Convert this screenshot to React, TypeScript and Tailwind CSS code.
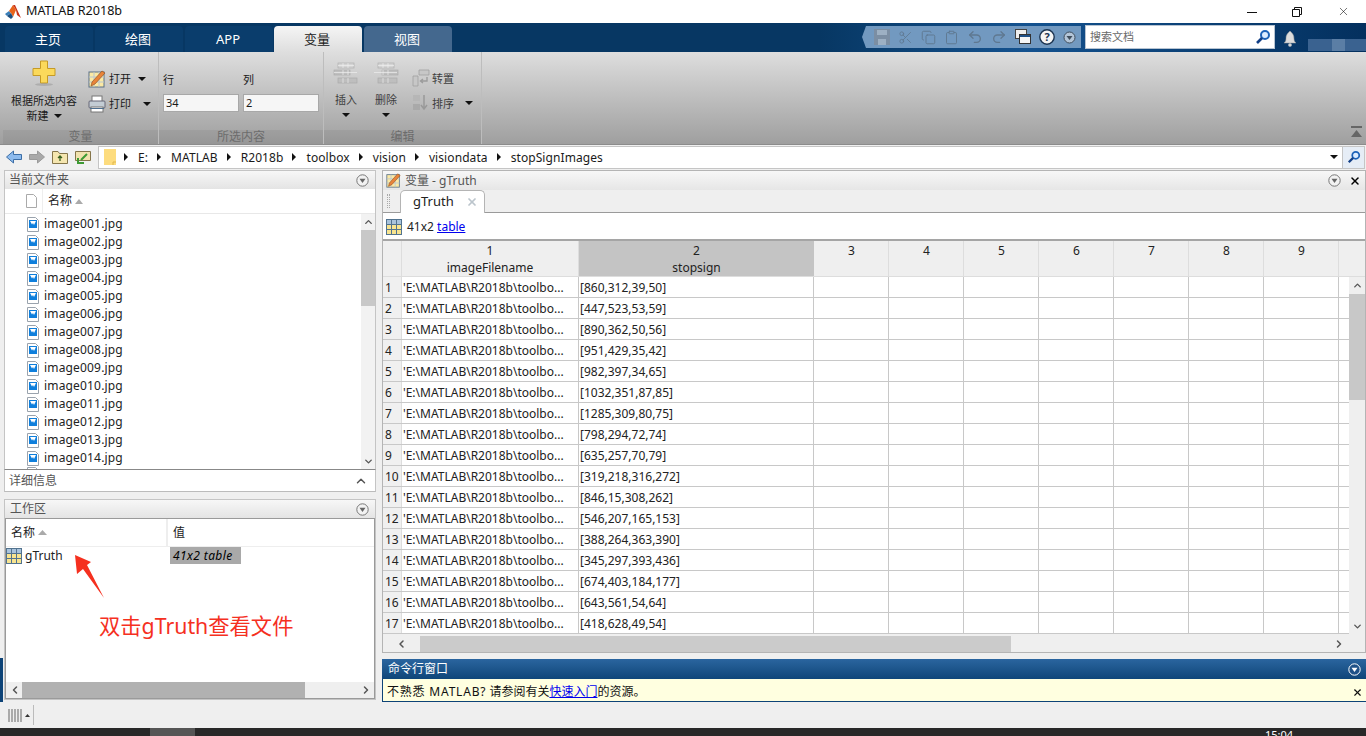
import { ChevronDown, ChevronLeft, ChevronRight, ChevronUp, Clipboard, Copy, Redo2, Scissors, Undo2, X } from 'lucide-react'

const FONT = "font-['Noto_Sans','Noto_Sans_CJK_SC',sans-serif]"

const rows = [
  '[860,312,39,50]',
  '[447,523,53,59]',
  '[890,362,50,56]',
  '[951,429,35,42]',
  '[982,397,34,65]',
  '[1032,351,87,85]',
  '[1285,309,80,75]',
  '[798,294,72,74]',
  '[635,257,70,79]',
  '[319,218,316,272]',
  '[846,15,308,262]',
  '[546,207,165,153]',
  '[388,264,363,390]',
  '[345,297,393,436]',
  '[674,403,184,177]',
  '[643,561,54,64]',
  '[418,628,49,54]',
]

const emptyCols = [3, 4, 5, 6, 7, 8, 9]
const crumbs = ['E:', 'MATLAB', 'R2018b', 'toolbox', 'vision', 'visiondata', 'stopSignImages']
const files = Array.from({ length: 14 }, (_, i) => `image${String(i + 1).padStart(3, '0')}.jpg`)

function Logo() {
  return (
    <svg width="16" height="16" viewBox="0 0 16 16">
      <polygon points="0,10 4,7 6,9 2,12" fill="#3a7fb8" />
      <polygon points="4,7 8,1 11,6 8,13 6,9" fill="#e8641b" />
      <polygon points="8,1 10,1 16,14 12,11 11,6" fill="#c9341a" />
      <polygon points="2,12 6,9 8,13 6,15" fill="#1d4f80" />
    </svg>
  )
}

function Caret({ className = '' }: { className?: string }) {
  return (
    <svg width="8" height="4" viewBox="0 0 8 4" className={className}>
      <polygon points="0,0 8,0 4,4" fill="#111" />
    </svg>
  )
}

function MenuCircle({ light = false }: { light?: boolean }) {
  return (
    <svg width="13" height="13" viewBox="0 0 13 13">
      <circle cx="6.5" cy="6.5" r="5.7" fill={light ? '#1f5288' : '#f2f2f2'} stroke={light ? '#fff' : '#777'} />
      <polygon points="3.5,4.8 9.5,4.8 6.5,9" fill={light ? '#fff' : '#666'} />
    </svg>
  )
}

function SearchGlass({ size = 16 }: { size?: number }) {
  return (
    <svg width={size} height={size} viewBox="0 0 16 16">
      <circle cx="10" cy="6" r="4" fill="#dcecff" stroke="#1c62b8" strokeWidth="2" />
      <line x1="7" y1="9" x2="2" y2="14" stroke="#123f86" strokeWidth="2.6" />
    </svg>
  )
}

function GridIcon() {
  return (
    <svg width="16" height="16" viewBox="0 0 16 16">
      <rect x="0.5" y="0.5" width="15" height="15" fill="#f8e48f" stroke="#52738f" />
      <rect x="1" y="1" width="14" height="4" fill="#a9c3dc" />
      <path d="M5.5 1V15M10.5 1V15M1 5.5H15M1 10.5H15" stroke="#52738f" />
    </svg>
  )
}

function PencilNote({ size = 18 }: { size?: number }) {
  return (
    <svg width={size} height={size} viewBox="0 0 18 18">
      <rect x="1" y="2" width="15" height="15" fill="#fbe9a4" stroke="#5a7188" />
      <path d="M1 7H16M6 2V17M11 2V17M1 12H16" stroke="#b9c6d2" />
      <polygon points="14,1 17,3 7,14 3,16 4,12" fill="#e8843a" stroke="#8a4a1b" strokeWidth="0.6" />
    </svg>
  )
}

function Printer() {
  return (
    <svg width="18" height="18" viewBox="0 0 18 18">
      <rect x="4" y="1" width="10" height="6" fill="#fff" stroke="#777" />
      <rect x="1" y="6" width="16" height="7" rx="1" fill="#c3ccd4" stroke="#667" />
      <rect x="3" y="12" width="12" height="5" fill="#fff" stroke="#777" />
      <rect x="2" y="13" width="14" height="1" fill="#4f6f8f" />
    </svg>
  )
}

function FileIcon() {
  return (
    <svg width="12" height="15" viewBox="0 0 12 15">
      <path d="M0.5 0.5H8.5L11.5 3.5V14.5H0.5Z" fill="#fff" stroke="#9aa3ad" />
      <rect x="2" y="3" width="8" height="8" fill="#0f7fdc" />
      <path d="M3 4H9L7 8L6 6L5 7.5Z" fill="#fff" />
    </svg>
  )
}

function Bricks({ shift = false }: { shift?: boolean }) {
  return (
    <svg width="26" height="24" viewBox="0 0 26 24">
      <g fill="#bdbdbd" stroke="#a2a2a2" strokeWidth="0.6" opacity="0.85">
        <rect x="5" y="1" width="16" height="5" fill="#d4d4d4" />
        <rect x={shift ? 9 : 1} y="8" width="16" height="5" />
        <rect x="5" y="16" width="19" height="5" />
      </g>
      <path d="M5 3.5H21M10 1V6M15 1V6M1 10.5H24M10 8V13M15 8V13M10 16V21M15 16V21" stroke="#eee" strokeWidth="0.7" />
    </svg>
  )
}

function DisabledSmall({ kind }: { kind: 'transpose' | 'sort' }) {
  return kind === 'transpose' ? (
    <svg width="18" height="18" viewBox="0 0 18 18">
      <path d="M1 7H6V17H1ZM7 1H17V6H7Z" fill="#c7c7c7" stroke="#9c9c9c" strokeWidth="0.7" />
      <path d="M15 8V12H9M11 10L8.500 12L11 14" fill="none" stroke="#9c9c9c" strokeWidth="1.4" />
    </svg>
  ) : (
    <svg width="18" height="18" viewBox="0 0 18 18">
      <path d="M12 1V14M9 11L12 15L15 11" fill="none" stroke="#999" strokeWidth="1.5" />
      <rect x="1" y="1" width="7" height="6" fill="#b6b6b6" />
      <rect x="1" y="10" width="7" height="6" fill="#a9a9a9" />
    </svg>
  )
}

function RibbonFooter({ label }: { label: string }) {
  return <div className="h-[14px] bg-black/5 text-center text-[12px] leading-[14px] text-[#6c6c6c]">{label}</div>
}

function Ribbon() {
  return (
    <div className="flex h-[92px] bg-gradient-to-b from-[#dedede] to-[#9f9f9f] pl-[3px]">
      <div className="flex w-[156px] flex-col border-r border-[#bdbdbd]">
        <div className="flex h-[78px] flex-1">
          <div className="flex w-[85px] flex-col items-center pr-[3px] pt-[8px] text-[11px] leading-[15px] text-[#1a1a1a]">
            <svg width="24" height="26" viewBox="0 0 24 26">
              <path d="M8.500 1H15.500V8.500H23V15.500H15.500V23H8.500V15.500H1V8.500H8.500Z" fill="#fbd95b" stroke="#c59a26" />
              <ellipse cx="12" cy="24.500" rx="9" ry="1.500" fill="#888" opacity="0.4" />
            </svg>
            <span className="mt-[7px] whitespace-nowrap">根据所选内容</span>
            <span className="flex items-center gap-[5px]">
              新建 <Caret />
            </span>
          </div>
          <div className="flex flex-col gap-[7px] pt-[18px] text-[11px] leading-[18px] text-[#1a1a1a]">
            <div className="flex items-center gap-[3px]">
              <PencilNote />
              <span>打开</span>
              <Caret className="ml-[4px]" />
            </div>
            <div className="flex items-center gap-[3px]">
              <Printer />
              <span>打印</span>
              <Caret className="ml-[9px]" />
            </div>
          </div>
        </div>
        <RibbonFooter label="变量" />
      </div>

      <div className="flex w-[165px] flex-col border-r border-[#bdbdbd]">
        <div className="flex flex-1 gap-[4px] pl-[4px] pt-[20px] text-[11px] text-[#1a1a1a]">
          {['行', '列'].map((label, i) => (
            <div key={label} className="w-[76px]">
              <div className="h-[22px] leading-[16px]">{label}</div>
              <div className="h-[18px] border border-[#a8a8a8] bg-[#f6f6f6] px-[2px] text-[11px] leading-[16px]">
                {i === 0 ? '34' : '2'}
              </div>
            </div>
          ))}
        </div>
        <RibbonFooter label="所选内容" />
      </div>

      <div className="flex w-[158px] flex-col border-r border-[#bdbdbd]">
        <div className="flex flex-1 pl-[2px] pt-[10px] text-[11px] leading-[15px] text-[#3e3e3e]">
          <div className="flex w-[40px] flex-col items-center">
            <Bricks />
            <span className="mt-[6px]">插入</span>
            <Caret className="mt-[6px]" />
          </div>
          <div className="flex w-[40px] flex-col items-center">
            <Bricks shift />
            <span className="mt-[6px]">删除</span>
            <Caret className="mt-[6px]" />
          </div>
          <div className="flex flex-col gap-[7px] pl-[6px] pt-[7px]">
            <div className="flex items-center gap-[2px]">
              <DisabledSmall kind="transpose" />
              <span>转置</span>
            </div>
            <div className="flex items-center gap-[2px]">
              <DisabledSmall kind="sort" />
              <span>排序</span>
              <Caret className="ml-[9px]" />
            </div>
          </div>
        </div>
        <RibbonFooter label="编辑" />
      </div>

      <div className="flex flex-1 items-end justify-end pb-[6px] pr-[4px]">
        <svg width="11" height="12" viewBox="0 0 11 12">
          <rect width="11" height="2" fill="#666" />
          <polygon points="0,11 11,11 5.500,4" fill="#666" />
        </svg>
      </div>
    </div>
  )
}

function TabStrip() {
  const tabs = ['主页', '绘图', 'APP']
  return (
    <div className="flex h-[29px] bg-gradient-to-r from-[#073763] from-60% via-[#14528f] via-75% to-[#04305e] pl-[5px] pt-[3px]">
      <div className="flex gap-[2px]">
        {tabs.map((t) => (
          <div key={t} className="h-[26px] w-[88px] rounded-t-[4px] bg-[#0a3d6c] pr-[2px] text-center text-[13px] leading-[26px] text-white">
            {t}
          </div>
        ))}
        <div className="-ml-[1px] h-[26px] w-[88px] rounded-t-[4px] bg-gradient-to-b from-[#f5f5f5] to-[#dedede] pr-[2px] text-center text-[13px] leading-[26px] text-[#222]">
          变量
        </div>
        <div className="h-[26px] w-[88px] rounded-t-[4px] bg-[#44688e] pr-[2px] text-center text-[13px] leading-[26px] text-white">视图</div>
      </div>
      <div className="flex-1" />
      <div className="mr-[4px] flex h-[22px] items-center gap-[8px] bg-[#7299c0] pl-[12px] pr-[5px] text-[#5f7890] [clip-path:polygon(4px_0,100%_0,100%_100%,4px_100%,0_50%)]">
        <svg width="16" height="16" viewBox="0 0 16 16">
          <path d="M0 0H16V16H0Z" fill="#7b8ea3" />
          <path d="M3 1H13V6H3ZM4 10H12V16H4Z" fill="#9db0c3" />
        </svg>
        <Scissors size={15} strokeWidth={1.3} />
        <Copy size={15} strokeWidth={1.5} />
        <Clipboard size={15} strokeWidth={1.5} />
        <Undo2 size={16} strokeWidth={2} />
        <Redo2 size={16} strokeWidth={2} />
        <svg width="16" height="16" viewBox="0 0 16 16">
          <rect x="0.500" y="0.500" width="11" height="9" fill="#eee" stroke="#444" />
          <rect x="4.500" y="5.500" width="11" height="9" fill="#f5f5f5" stroke="#333" />
          <rect x="5" y="6" width="10" height="2" fill="#1e4f86" />
        </svg>
        <svg width="16" height="16" viewBox="0 0 16 16">
          <circle cx="8" cy="8" r="7.200" fill="#f4f4f4" stroke="#1b3350" strokeWidth="1.400" />
          <text x="8" y="12" textAnchor="middle" fontSize="11" fontWeight="700" fill="#1b3350">?</text>
        </svg>
        <svg width="13" height="13" viewBox="0 0 13 13">
          <circle cx="6.500" cy="6.500" r="5.500" fill="#b3c5d8" stroke="#3f4d5c" />
          <polygon points="3.500,5 9.500,5 6.500,9" fill="#3f4d5c" />
        </svg>
      </div>
      <div className="flex h-[24px] w-[190px] -translate-y-[1px] items-center justify-between border border-[#b7c4d2] bg-white pl-[4px] pr-[3px] text-[11px] text-[#6a6a6a]">
        <span>搜索文档</span>
        <SearchGlass />
      </div>
      <div className="flex w-[91px] items-start pl-[8px] pt-[4px]">
        <svg width="14" height="17" viewBox="0 0 14 17">
          <path d="M7 1C4 4 3 5 3 9C3 11 2 12 1 13H13C12 12 11 11 11 9C11 5 10 4 7 1Z" fill="#dcdcdc" stroke="#999" strokeWidth="0.500" />
          <circle cx="7" cy="15" r="1.800" fill="#d3d3d3" />
        </svg>
        <div className="ml-[11px] mt-[9px] flex">
          <div className="h-[12px] w-[24px] bg-[#3a6290]" />
          <div className="h-[12px] w-[13px] bg-[#5b7ea5]" />
          <div className="h-[12px] w-[21px] bg-[#3a6290]" />
        </div>
      </div>
    </div>
  )
}

function AddressBar() {
  return (
    <div className="flex h-[25px] items-center border-t border-[#8c8c8c] bg-[#f0f0f0] pl-[6px] pr-[1px]">
      <div className="flex w-[92px] items-center gap-[7px]">
        <svg width="16" height="14" viewBox="0 0 16 14">
          <path d="M0.500 7L7.500 1V4.500H15.500V9.500H7.500V13Z" fill="#8dbbee" stroke="#3c6ea6" />
        </svg>
        <svg width="16" height="14" viewBox="0 0 16 14">
          <path d="M15.500 7L8.500 1V4.500H0.500V9.500H8.500V13Z" fill="#a9a9a9" stroke="#9a9a9a" />
        </svg>
        <svg width="16" height="14" viewBox="0 0 16 14">
          <path d="M0.500 1.500H6L7.500 3.500H15.500V13.500H0.500Z" fill="#f5e6b0" stroke="#85754a" />
          <path d="M8 11V6M6 8L8 6L10 8" fill="none" stroke="#39601f" strokeWidth="1.300" />
        </svg>
        <svg width="16" height="15" viewBox="0 0 16 15">
          <path d="M0.500 1.500H15.500V10.500H0.500Z" fill="#f0e2ae" stroke="#85754a" />
          <path d="M12 4L6 10M3 8V13H9" fill="none" stroke="#3d9a34" strokeWidth="2" />
        </svg>
      </div>
      <div className="flex h-[23px] flex-1 items-center border border-[#c5c5c5] bg-white pl-[5px] text-[12px] tracking-[0.08px] text-[#1a1a1a]">
        <svg width="12" height="16" viewBox="0 0 12 16" className="mr-[-1px]">
          <path d="M0 0H12V16H0Z" fill="#fddc7e" />
          <path d="M9 16V13H12" fill="none" stroke="#e0b84c" />
        </svg>
        {crumbs.map((c) => (
          <div key={c} className="ml-[9px] flex items-center gap-[10px]">
            <svg width="4" height="8" viewBox="0 0 4 8">
              <polygon points="0,0 4,4 0,8" fill="#111" />
            </svg>
            <span className="pt-[1px] leading-[16px]">{c}</span>
          </div>
        ))}
        <div className="flex-1" />
        <Caret className="mr-[4px]" />
        <div className="flex h-[21px] w-[22px] items-center justify-center border-l border-[#c5c5c5] bg-[#e6edf6]">
          <SearchGlass size={14} />
        </div>
      </div>
    </div>
  )
}

function FolderPanel() {
  return (
    <div className="flex h-[299px] shrink-0 flex-col border border-b-0 border-[#c4c4c4]">
      <div className="flex h-[18px] shrink-0 items-center justify-between bg-gradient-to-b from-[#f7f7f7] to-[#e4e4e4] pl-[4px] pr-[6px] text-[12px] text-[#555]">
        <span>当前文件夹</span>
        <MenuCircle />
      </div>
      <div className="flex h-[25px] shrink-0 items-center border-b border-[#e8e8e8] bg-white text-[12px] text-[#222]">
        <div className="flex h-full w-[38px] items-center justify-end border-r border-[#eee] pr-[5px]">
          <svg width="11" height="14" viewBox="0 0 11 14">
            <path d="M0.500 0.500H7.500L10.500 3.500V13.500H0.500Z" fill="#fff" stroke="#aaa" />
          </svg>
        </div>
        <div className="flex items-center gap-[3px] pl-[5px]">
          <span>名称</span>
          <svg width="8" height="5" viewBox="0 0 8 5">
            <polygon points="0,5 8,5 4,0" fill="#aaa" />
          </svg>
        </div>
      </div>
      <div className="flex min-h-0 flex-1 bg-white">
        <div className="min-w-0 flex-1 overflow-hidden pl-[22px] pt-[1px]">
          {files.map((f) => (
            <div key={f} className="flex h-[18px] items-center gap-[5px] text-[12px] tracking-[0.17px] text-[#222]">
              <FileIcon />
              <span>{f}</span>
            </div>
          ))}
          <FileIcon />
        </div>
        <div className="flex w-[14px] flex-col items-center bg-[#f2f2f2] text-[#555]">
          <ChevronUp size={11} strokeWidth={3} className="my-[2px] h-[12px]" />
          <div className="h-[76px] w-full bg-[#c8c8c8]" />
          <div className="flex-1" />
          <ChevronDown size={11} strokeWidth={3} className="my-[2px]" />
        </div>
      </div>
    </div>
  )
}

function DetailBar() {
  return (
    <div className="flex h-[23px] shrink-0 items-center justify-between border border-t-[#888] border-x-[#c4c4c4] border-b-[#bbb] bg-white pl-[4px] pr-[7px] text-[12px] text-[#555]">
      <span>详细信息</span>
      <ChevronUp size={14} strokeWidth={2.5} />
    </div>
  )
}

function WorkspacePanel() {
  return (
    <div className="relative flex h-[201px] shrink-0 flex-col border border-[#c4c4c4]">
      <div className="flex h-[18px] shrink-0 items-center justify-between bg-gradient-to-b from-[#f7f7f7] to-[#e4e4e4] pl-[5px] pr-[6px] text-[12px] text-[#555]">
        <span>工作区</span>
        <MenuCircle />
      </div>
      <div className="flex min-h-0 flex-1 flex-col border border-[#9a9a9a] bg-white">
        <div className="flex h-[28px] shrink-0 items-center border-b border-[#eee] text-[12px] text-[#222]">
          <div className="flex h-full w-[162px] items-center gap-[3px] border-r-2 border-[#eee] pl-[5px]">
            <span>名称</span>
            <svg width="9" height="5" viewBox="0 0 9 5">
              <polygon points="0,5 9,5 4.500,0" fill="#aaa" />
            </svg>
          </div>
          <span className="pl-[5px]">值</span>
        </div>
        <div className="flex h-[17px] shrink-0 items-center text-[12px] text-[#222]">
          <div className="flex w-[164px] items-center gap-[3px]">
            <GridIcon />
            <span>gTruth</span>
          </div>
          <div className="h-[17px] w-[71px] bg-[#a9a9a9] pl-[3px] text-[12px] italic leading-[17px] tracking-[0.4px] text-black">41x2 table</div>
        </div>
        <div className="flex-1" />
        <div className="flex h-[16px] shrink-0 items-center bg-[#efefef] text-[#555]">
          <ChevronLeft size={12} strokeWidth={3} className="ml-[2px] w-[14px]" />
          <div className="h-full w-[283px] bg-[#b1b1b1]" />
          <div className="flex-1" />
          <ChevronRight size={12} strokeWidth={3} className="mr-[2px]" />
        </div>
      </div>
      <svg width="32" height="46" viewBox="0 0 32 46" className="absolute left-[69px] top-[54px]">
        <polygon points="1,1 17,8 13,11 30,44 9,15 3,20" fill="#f5301f" />
      </svg>
      <div className="absolute left-[94px] top-[113px] whitespace-nowrap text-[21.3px] leading-[26px] text-[#f5301f]">双击gTruth查看文件</div>
    </div>
  )
}

function VarTable() {
  return (
    <div className="flex min-h-0 flex-1 flex-col border-t-2 border-[#a5a5a5] bg-[#efefef] text-[12px] text-[#222]">
      <div className="flex h-[36px] shrink-0 border-b border-[#ddd] pt-0 text-center leading-[17px]">
        <div className="w-[19px] border-r border-[#ddd]" />
        <div className="w-[177px] border-r border-[#ddd] pt-[1px]">
          1<br />imageFilename
        </div>
        <div className="w-[235px] bg-[#c4c4c4] pt-[1px]">
          2<br />stopsign
        </div>
        {emptyCols.map((c) => (
          <div key={c} className="w-[75px] border-r border-[#ddd] pl-[1px] pt-[1px]">
            {c}
          </div>
        ))}
      </div>
      <div className="flex min-h-0 flex-1">
        <div className="w-[966px] min-w-0">
          {rows.map((r, i) => (
            <div key={i} className="flex h-[21px] border-b border-[#c8c8c8] bg-white leading-[21px]">
              <div className="w-[19px] shrink-0 border-r border-[#ddd] bg-[#f0f0f0] pl-[2px]">{i + 1}</div>
              <div className="w-[177px] shrink-0 border-r border-[#c8c8c8] pl-[1px]">'E:\MATLAB\R2018b\toolbo...</div>
              <div className="w-[235px] shrink-0 border-r border-[#c8c8c8] pl-[1px]">{r}</div>
              {emptyCols.map((c) => (
                <div key={c} className="w-[75px] shrink-0 border-r border-[#c8c8c8]" />
              ))}
            </div>
          ))}
        </div>
        <div className="flex flex-1 flex-col items-center text-[#555]">
          <ChevronUp size={11} strokeWidth={3} className="my-[3px]" />
          <div className="h-[106px] w-full bg-[#c8c8c8]" />
          <div className="flex-1" />
          <ChevronDown size={11} strokeWidth={3} className="mb-[4px]" />
        </div>
      </div>
      <div className="flex h-[16px] shrink-0 items-center text-[#555]">
        <ChevronLeft size={12} strokeWidth={3} className="w-[37px]" />
        <div className="h-full w-[591px] bg-[#cbcbcb]" />
        <div className="flex-1" />
        <ChevronRight size={12} strokeWidth={3} className="mr-[20px]" />
      </div>
    </div>
  )
}

function VariablePanel() {
  return (
    <div className="flex h-[483px] shrink-0 flex-col border border-[#b4b4b4]">
      <div className="flex h-[19px] shrink-0 items-center bg-gradient-to-b from-[#f7f7f7] to-[#e6e6e6] pl-[3px] pr-[4px] text-[12px] text-[#555]">
        <PencilNote size={15} />
        <span className="ml-[4px]">变量 - gTruth</span>
        <div className="flex-1" />
        <MenuCircle />
        <X size={12} strokeWidth={3} className="ml-[8px] text-black" />
      </div>
      <div className="flex h-[23px] shrink-0 items-end border-b border-[#9a9a9a] bg-[#efefef] pl-[4px]">
        <div className="mb-[4px] mr-[10px] h-[14px] w-[3px] border-x border-dotted border-[#aaa]" />
        <div className="-mb-px flex h-[23px] w-[85px] items-center justify-between rounded-t-[5px] border border-b-0 border-[#b4b4b4] bg-white pl-[12px] pr-[6px] text-[13px] text-[#222]">
          <span>gTruth</span>
          <X size={12} strokeWidth={3.5} className="text-[#bcc5cc]" />
        </div>
      </div>
      <div className="flex h-[26px] shrink-0 items-center gap-[5px] bg-white pl-[3px] pt-[2px] text-[12px] text-[#222]">
        <GridIcon />
        <span>
          41x2 <span className="text-[#0000ee] underline">table</span>
        </span>
      </div>
      <VarTable />
    </div>
  )
}

function CommandWindow() {
  return (
    <div className="flex h-[43px] shrink-0 flex-col border-b-2 border-[#0d4377] bg-[#0d4377]">
      <div className="flex h-[20px] shrink-0 items-center justify-between bg-gradient-to-b from-[#2a659f] to-[#0f4679] pl-[6px] pr-[5px] text-[12px] text-white">
        <span>命令行窗口</span>
        <MenuCircle light />
      </div>
      <div className="flex flex-1 items-center justify-between border-l border-[#0d4377] bg-[#ffffe0] pl-[4px] pr-[3px] pt-[4px] text-[12px] text-[#111]">
        <span>
          <span className="tracking-[0.8px]">不熟悉 MATLAB?</span> 请参阅有关<span className="text-[#0000ee] underline">快速入门</span>的资源。
        </span>
        <X size={11} strokeWidth={2.5} />
      </div>
    </div>
  )
}

export default function App() {
  return (
    <div className={`flex h-[736px] w-[1366px] flex-col overflow-hidden bg-[#efefef] ${FONT}`}>
      <div className="flex h-[23px] items-center bg-white pl-[5px] text-[12.6px] text-[#111]">
        <Logo />
        <span className="ml-[5px]">MATLAB R2018b</span>
        <div className="flex-1" />
        <svg width="10" height="10" viewBox="0 0 10 10" className="mr-[35px]">
          <line x1="0" y1="5.500" x2="10" y2="5.500" stroke="#111" />
        </svg>
        <svg width="10" height="10" viewBox="0 0 10 10" className="mr-[35px]">
          <path d="M0.500 2.500H7.500V9.500H0.500ZM2.500 2.500V0.500H9.500V7.500H7.500" fill="none" stroke="#111" />
        </svg>
        <X size={13} strokeWidth={1} className="mr-[16px] text-black" />
      </div>
      <TabStrip />
      <Ribbon />
      <AddressBar />
      <div className="flex h-[533px] pt-[1px]">
        <div className="flex w-[4px] shrink-0 flex-col justify-end">
          <div className="h-[44px] w-[3px] bg-[#0d4377]" />
        </div>
        <div className="flex w-[372px] shrink-0 flex-col">
          <FolderPanel />
          <DetailBar />
          <div className="h-[7px] shrink-0" />
          <WorkspacePanel />
        </div>
        <div className="flex w-[990px] shrink-0 flex-col pl-[6px]">
          <VariablePanel />
          <div className="h-[6px] shrink-0" />
          <CommandWindow />
        </div>
      </div>
      <div className="flex h-[26px] items-center pl-[8px]">
        <div className="flex gap-[1px]">
          <div className="h-[13px] w-[2px] bg-[#aaa]" />
          <div className="h-[13px] w-[2px] bg-[#aaa]" />
          <div className="h-[13px] w-[2px] bg-[#aaa]" />
          <div className="h-[13px] w-[2px] bg-[#aaa]" />
          <div className="h-[13px] w-[2px] bg-[#aaa]" />
        </div>
        <svg width="5" height="3" viewBox="0 0 5 3" className="ml-[3px] mr-[3px]">
          <polygon points="0,3 5,3 2.500,0" fill="#333" />
        </svg>
        <div className="h-[20px] w-px bg-[#bbb]" />
      </div>
      <div className="flex h-[8px] overflow-hidden bg-[#282828] text-[11px] leading-[14px] text-white">
        <div className="ml-[150px] h-full w-[45px] bg-[#555]" />
        <div className="flex-1" />
        <span className="mr-[73px]">15:04</span>
      </div>
    </div>
  )
}
